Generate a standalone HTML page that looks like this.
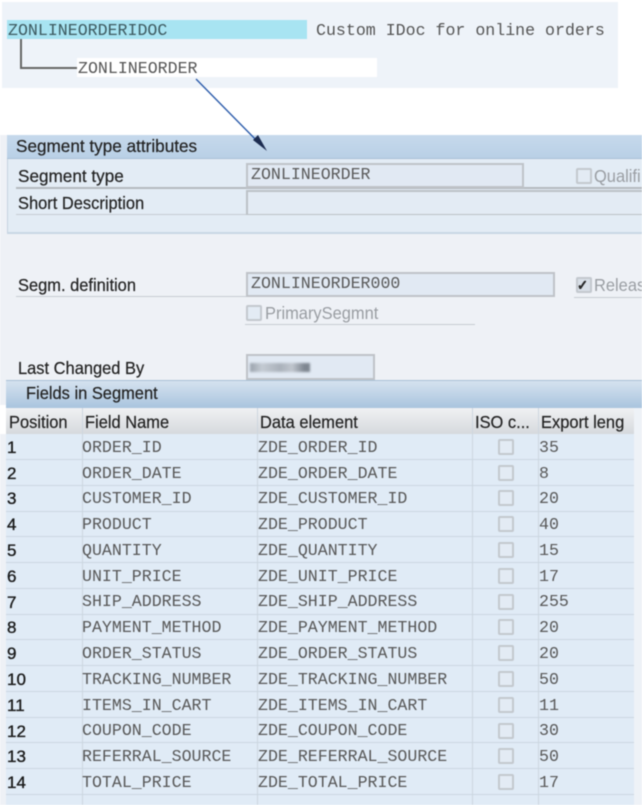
<!DOCTYPE html>
<html><head><meta charset="utf-8"><style>
html,body{margin:0;padding:0;background:#fff}
#p{position:relative;width:642px;height:805px;overflow:hidden;background:#fff;filter:blur(.5px)}
#p div{position:absolute;white-space:nowrap}
.m{font-family:"Liberation Mono",monospace;font-size:16.6px;line-height:20px;color:#585858;transform:translateY(1px)}
.s{font-family:"Liberation Sans",sans-serif;font-size:17.5px;line-height:20px;color:#222;transform-origin:0 50%;transform:scaleX(.94);-webkit-text-stroke:.2px #222}
.n{font-family:"Liberation Sans",sans-serif;font-size:17px;line-height:20px;color:#1a1a1a;-webkit-text-stroke:.35px #1a1a1a}
.f{box-sizing:border-box;border:2px solid #bfc3c8;background:#e1e9f3}
.c{box-sizing:border-box;width:16px;height:16px;border:2px solid #c3c8ce;border-radius:2px;background:#e3ebf4}
.l{background:#c6ccd2;height:1px}
.g{-webkit-text-stroke:0}
</style></head><body><div id="p">

<div style="left:2px;top:2px;width:616px;height:86px;background:#eef3f9"></div>
<div style="left:7px;top:20px;width:300px;height:19px;background:#a8e4f2"></div>
<div style="left:77px;top:58px;width:300px;height:19px;background:#fff"></div>
<div style="left:20px;top:39px;width:1.5px;height:29px;background:#666"></div>
<div style="left:20px;top:67px;width:57px;height:1.5px;background:#666"></div>
<div class="m" style="left:8px;top:20px;color:#3d5a60">ZONLINEORDERIDOC</div>
<div class="m" style="left:316px;top:20px;color:#555">Custom IDoc for online orders</div>
<div class="m" style="left:78px;top:58px;color:#555">ZONLINEORDER</div>

<!-- segment panel -->
<div style="left:0;top:135px;width:642px;height:270px;background:#eef1f6"></div>
<div style="left:7px;top:135px;width:635px;height:99px;background:#e3ecf5;border-left:1px solid #c5d3e0;border-bottom:2px solid #c8d7e5;box-sizing:border-box"></div>
<div style="left:7px;top:135px;width:635px;height:24px;background:linear-gradient(#c6d9ec,#b9d0e6);border-bottom:1px solid #a9c0d6;box-sizing:border-box"></div>
<div class="s" style="left:16px;top:136px;transform:scaleX(.98)">Segment type attributes</div>

<div class="s" style="left:18px;top:166px;transform:scaleX(.98)">Segment type</div>
<div class="l" style="left:16px;top:187px;width:626px;height:2px;background:#b5babf"></div>
<div class="f" style="left:246px;top:163px;width:278px;height:25px"></div>
<div class="m" style="left:251px;top:164px;color:#5a5a5a">ZONLINEORDER</div>
<div class="c" style="left:576px;top:168px"></div>
<div class="s g" style="left:594px;top:166px;color:#9a9ea3">Qualifi</div>

<div class="s" style="left:18px;top:193px">Short Description</div>
<div class="l" style="left:16px;top:214px;width:626px"></div>
<div style="left:246px;top:190px;width:396px;height:25px;box-sizing:border-box;border-left:2px solid #bcc1c6;border-top:2px solid #bcc1c6;border-bottom:1px solid #bcc1c6;background:#e3ebf4"></div>

<div class="s" style="left:18px;top:275px">Segm. definition</div>
<div class="l" style="left:16px;top:296px;width:230px"></div>
<div class="f" style="left:246px;top:272px;width:309px;height:25px"></div>
<div class="m" style="left:251px;top:273px;color:#5a5a5a">ZONLINEORDER000</div>
<div class="c" style="left:576px;top:277px;background:#d8dfe7"></div>
<div class="s" style="left:577px;top:275px;font-size:14px;font-weight:bold;color:#333">✓</div>
<div class="s g" style="left:594px;top:275px;color:#9a9ea3">Releas</div>
<div class="l" style="left:574px;top:297px;width:68px"></div>

<div class="c" style="left:246px;top:305px"></div>
<div class="s g" style="left:265px;top:303px;color:#999da2">PrimarySegmnt</div>
<div class="l" style="left:245px;top:324px;width:230px"></div>

<div class="s" style="left:18px;top:358px">Last Changed By</div>
<div class="f" style="left:246px;top:354px;width:129px;height:26px"></div>
<div style="left:250px;top:363px;width:60px;height:9px;background:linear-gradient(90deg,#9aa2ac,#c4cbd3 20%,#aab1ba 50%,#c0c6ce 70%,#808892 90%,#7c848e);filter:blur(1px)"></div>

<!-- fields in segment -->
<div style="left:6px;top:380px;width:636px;height:28px;background:linear-gradient(#d5e2ef,#a9c4de);border-top:1px solid #a9c0d6;box-sizing:border-box"></div>
<div class="s" style="left:26px;top:383px">Fields in Segment</div>

<div style="left:6px;top:408px;width:628px;height:26px;background:linear-gradient(#f0f1f3,#d6d9dd)"></div>
<div style="left:6px;top:434px;width:628px;height:371px;background:#e0ebf6"></div>
<div style="left:634px;top:408px;width:8px;height:397px;background:#eef2f7"></div>
<div style="left:0;top:434px;width:6px;height:371px;background:#eef1f6"></div>

<div class="s" style="left:9px;top:412px">Position</div>
<div class="s" style="left:85px;top:412px">Field Name</div>
<div class="s" style="left:260px;top:412px">Data element</div>
<div class="s" style="left:475px;top:412px">ISO c...</div>
<div class="s" style="left:541px;top:412px">Export leng</div>

<div style="left:82px;top:408px;width:1px;height:397px;background:#cdd6df"></div>
<div style="left:257px;top:408px;width:1px;height:397px;background:#cdd6df"></div>
<div style="left:472px;top:408px;width:1px;height:397px;background:#cdd6df"></div>
<div style="left:538px;top:408px;width:1px;height:397px;background:#cdd6df"></div>

<div class="l" style="left:6px;top:459px;width:628px;background:#cbd6e1"></div>
<div class="l" style="left:6px;top:485px;width:628px;background:#cbd6e1"></div>
<div class="l" style="left:6px;top:511px;width:628px;background:#cbd6e1"></div>
<div class="l" style="left:6px;top:536px;width:628px;background:#cbd6e1"></div>
<div class="l" style="left:6px;top:562px;width:628px;background:#cbd6e1"></div>
<div class="l" style="left:6px;top:588px;width:628px;background:#cbd6e1"></div>
<div class="l" style="left:6px;top:614px;width:628px;background:#cbd6e1"></div>
<div class="l" style="left:6px;top:639px;width:628px;background:#cbd6e1"></div>
<div class="l" style="left:6px;top:665px;width:628px;background:#cbd6e1"></div>
<div class="l" style="left:6px;top:691px;width:628px;background:#cbd6e1"></div>
<div class="l" style="left:6px;top:717px;width:628px;background:#cbd6e1"></div>
<div class="l" style="left:6px;top:742px;width:628px;background:#cbd6e1"></div>
<div class="l" style="left:6px;top:768px;width:628px;background:#cbd6e1"></div>
<div class="l" style="left:6px;top:794px;width:628px;background:#cbd6e1"></div>

<div class="n" style="left:7px;top:438px">1</div><div class="m" style="left:82px;top:437px">ORDER_ID</div><div class="m" style="left:258px;top:437px">ZDE_ORDER_ID</div><div class="c" style="left:498px;top:439px"></div><div class="m" style="left:539px;top:437px">35</div>
<div class="n" style="left:7px;top:464px">2</div><div class="m" style="left:82px;top:463px">ORDER_DATE</div><div class="m" style="left:258px;top:463px">ZDE_ORDER_DATE</div><div class="c" style="left:498px;top:465px"></div><div class="m" style="left:539px;top:463px">8</div>
<div class="n" style="left:7px;top:489px">3</div><div class="m" style="left:82px;top:488px">CUSTOMER_ID</div><div class="m" style="left:258px;top:488px">ZDE_CUSTOMER_ID</div><div class="c" style="left:498px;top:490px"></div><div class="m" style="left:539px;top:488px">20</div>
<div class="n" style="left:7px;top:515px">4</div><div class="m" style="left:82px;top:514px">PRODUCT</div><div class="m" style="left:258px;top:514px">ZDE_PRODUCT</div><div class="c" style="left:498px;top:516px"></div><div class="m" style="left:539px;top:514px">40</div>
<div class="n" style="left:7px;top:541px">5</div><div class="m" style="left:82px;top:540px">QUANTITY</div><div class="m" style="left:258px;top:540px">ZDE_QUANTITY</div><div class="c" style="left:498px;top:542px"></div><div class="m" style="left:539px;top:540px">15</div>
<div class="n" style="left:7px;top:567px">6</div><div class="m" style="left:82px;top:566px">UNIT_PRICE</div><div class="m" style="left:258px;top:566px">ZDE_UNIT_PRICE</div><div class="c" style="left:498px;top:568px"></div><div class="m" style="left:539px;top:566px">17</div>
<div class="n" style="left:7px;top:593px">7</div><div class="m" style="left:82px;top:591px">SHIP_ADDRESS</div><div class="m" style="left:258px;top:591px">ZDE_SHIP_ADDRESS</div><div class="c" style="left:498px;top:594px"></div><div class="m" style="left:539px;top:591px">255</div>
<div class="n" style="left:7px;top:618px">8</div><div class="m" style="left:82px;top:617px">PAYMENT_METHOD</div><div class="m" style="left:258px;top:617px">ZDE_PAYMENT_METHOD</div><div class="c" style="left:498px;top:619px"></div><div class="m" style="left:539px;top:617px">20</div>
<div class="n" style="left:7px;top:644px">9</div><div class="m" style="left:82px;top:643px">ORDER_STATUS</div><div class="m" style="left:258px;top:643px">ZDE_ORDER_STATUS</div><div class="c" style="left:498px;top:645px"></div><div class="m" style="left:539px;top:643px">20</div>
<div class="n" style="left:7px;top:670px">10</div><div class="m" style="left:82px;top:669px">TRACKING_NUMBER</div><div class="m" style="left:258px;top:669px">ZDE_TRACKING_NUMBER</div><div class="c" style="left:498px;top:671px"></div><div class="m" style="left:539px;top:669px">50</div>
<div class="n" style="left:7px;top:696px">11</div><div class="m" style="left:82px;top:695px">ITEMS_IN_CART</div><div class="m" style="left:258px;top:695px">ZDE_ITEMS_IN_CART</div><div class="c" style="left:498px;top:697px"></div><div class="m" style="left:539px;top:695px">11</div>
<div class="n" style="left:7px;top:722px">12</div><div class="m" style="left:82px;top:720px">COUPON_CODE</div><div class="m" style="left:258px;top:720px">ZDE_COUPON_CODE</div><div class="c" style="left:498px;top:723px"></div><div class="m" style="left:539px;top:720px">30</div>
<div class="n" style="left:7px;top:747px">13</div><div class="m" style="left:82px;top:746px">REFERRAL_SOURCE</div><div class="m" style="left:258px;top:746px">ZDE_REFERRAL_SOURCE</div><div class="c" style="left:498px;top:748px"></div><div class="m" style="left:539px;top:746px">50</div>
<div class="n" style="left:7px;top:773px">14</div><div class="m" style="left:82px;top:772px">TOTAL_PRICE</div><div class="m" style="left:258px;top:772px">ZDE_TOTAL_PRICE</div><div class="c" style="left:498px;top:774px"></div><div class="m" style="left:539px;top:772px">17</div>

<svg style="position:absolute;left:0;top:0" width="642" height="805"><path d="M196 79L262 146" stroke="#2c5cab" stroke-width="1.4" fill="none"/><path d="M267 151L253 140L258 135Z" fill="#1c2c50"/></svg>
</div></body></html>
